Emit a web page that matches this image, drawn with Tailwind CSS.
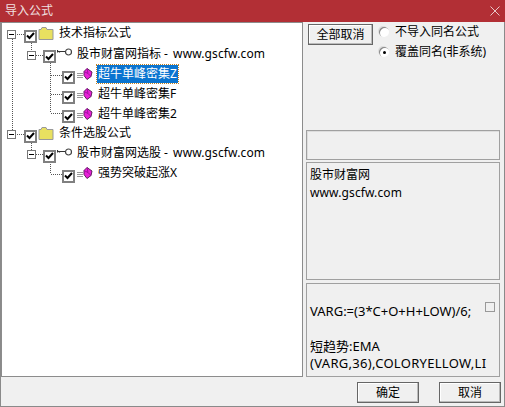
<!DOCTYPE html>
<html lang="zh-CN">
<head>
    <meta charset="UTF-8">
    <title>导入公式</title>
    <script src="https://cdn.jsdelivr.net/npm/@tailwindcss/browser@4"></script>
</head>
<body class="w-[505px] h-[407px] overflow-hidden bg-[#f0f0f0] text-[12px] text-black font-['Noto_Sans','Noto_Sans_CJK_SC',sans-serif]">
<div class="w-[505px] h-[407px] flex flex-col border-x border-b border-[#8a8a8a]">
    <!-- title bar -->
    <header class="h-[22px] shrink-0 -mx-px bg-[#b22f35] flex items-center justify-between pl-[5px] pr-[5px] text-[#f0e0e0] leading-none">
        <span>导入公式</span>
        <svg width="10" height="10" viewBox="0 0 10 10" stroke="#e8c8c8" fill="none"><path d="M0.5 0.5l9 9M9.5 0.5l-9 9"/></svg>
    </header>

    <div class="flex h-[355px] shrink-0">
        <!-- tree -->
        <div class="relative w-[302px] shrink-0 bg-white border border-[#8c8c8c] leading-none">
            <svg class="absolute left-0 top-0" width="120" height="180" fill="none" stroke="#555" stroke-dasharray="1 1">
                <path d="M10.500 16v92M15 11.500h8M29.500 20v9M34 32.500h8M48.500 40v50M49 52.500h12M49 71.500h12M49 90.500h12"/>
                <path d="M15 111.500h8M29.500 120v8M34 131.500h8M48.500 139v12M49 151.500h12"/>
            </svg>

            <div class="relative flex items-center h-[20px] pl-[5px]">
                <span class="mt-[3px] w-[9px] h-[9px] border border-[#777] bg-white flex items-center justify-center"><span class="w-[5px] h-px bg-black"></span></span>
                <span class="mt-[6px] ml-[8px] w-[13px] h-[13px] border-2 border-[#808080] bg-white flex items-center justify-center"><svg width="9" height="8" viewBox="0 0 9 8" fill="none" stroke="#000" stroke-width="2"><path d="M1 3.5l2.5 2.5 4.5-5"/></svg></span>
                <svg class="ml-[1px]" width="16" height="13" viewBox="0 0 16 13"><path d="M1 2.5h2l1-2h4l1 2h6v10h-14z" fill="#e8e060" stroke="#999"/></svg>
                <span class="ml-[5px]">技术指标公式</span>
            </div>
            <div class="relative flex items-center h-[21px] pl-[25px]">
                <span class="mt-[3px] w-[9px] h-[9px] border border-[#777] bg-white flex items-center justify-center"><span class="w-[5px] h-px bg-black"></span></span>
                <span class="mt-[6px] ml-[7px] w-[13px] h-[13px] border-2 border-[#808080] bg-white flex items-center justify-center"><svg width="9" height="8" viewBox="0 0 9 8" fill="none" stroke="#000" stroke-width="2"><path d="M1 3.5l2.5 2.5 4.5-5"/></svg></span>
                <svg class="ml-[1px] -mt-[2px]" width="15" height="9" viewBox="0 0 15 9" fill="none" stroke="#333" stroke-width="1.2"><path d="M0.5 2v2.5M2.5 3v1.500M0.5 3.500h8"/><circle cx="11.500" cy="4" r="3" stroke="#444"/></svg>
                <span class="ml-[5px]">股市财富网指标 - <span class="ml-[2px] tracking-[0.12px]">www.gscfw.com</span></span>
            </div>
            <div class="relative flex items-center h-[20px] pl-[60px]">
                <span class="mt-[6px] w-[13px] h-[13px] border-2 border-[#808080] bg-white flex items-center justify-center"><svg width="9" height="8" viewBox="0 0 9 8" fill="none" stroke="#000" stroke-width="2"><path d="M1 3.5l2.5 2.5 4.5-5"/></svg></span>
                <svg class="ml-[2px]" width="16" height="12" viewBox="0 0 16 12"><path d="M0 5.500h6M0 7.500h6M0 9.500h6" stroke="#999"/><path d="M10 0.500l5 3.500-1 4.500-4 3-3-4v-4z" fill="#e820d8" stroke="#602060"/><path d="M10 0.500l1 5 3 3M7 3.500l4 2" stroke="#a010a0" fill="none"/></svg>
                <span class="ml-[4px] px-px py-[3px] bg-[#0a74d0] text-white outline-1 outline-dotted outline-[#c08020]">超牛单峰密集Z</span>
            </div>
            <div class="relative flex items-center h-[20px] pl-[60px]">
                <span class="mt-[6px] w-[13px] h-[13px] border-2 border-[#808080] bg-white flex items-center justify-center"><svg width="9" height="8" viewBox="0 0 9 8" fill="none" stroke="#000" stroke-width="2"><path d="M1 3.5l2.5 2.5 4.5-5"/></svg></span>
                <svg class="ml-[2px]" width="16" height="12" viewBox="0 0 16 12"><path d="M0 5.500h6M0 7.500h6M0 9.500h6" stroke="#999"/><path d="M10 0.500l5 3.500-1 4.500-4 3-3-4v-4z" fill="#e820d8" stroke="#602060"/><path d="M10 0.500l1 5 3 3M7 3.500l4 2" stroke="#a010a0" fill="none"/></svg>
                <span class="ml-[5px]">超牛单峰密集F</span>
            </div>
            <div class="relative flex items-center h-[19px] pl-[60px]">
                <span class="mt-[6px] w-[13px] h-[13px] border-2 border-[#808080] bg-white flex items-center justify-center"><svg width="9" height="8" viewBox="0 0 9 8" fill="none" stroke="#000" stroke-width="2"><path d="M1 3.5l2.5 2.5 4.5-5"/></svg></span>
                <svg class="ml-[2px]" width="16" height="12" viewBox="0 0 16 12"><path d="M0 5.500h6M0 7.500h6M0 9.500h6" stroke="#999"/><path d="M10 0.500l5 3.500-1 4.500-4 3-3-4v-4z" fill="#e820d8" stroke="#602060"/><path d="M10 0.500l1 5 3 3M7 3.500l4 2" stroke="#a010a0" fill="none"/></svg>
                <span class="ml-[5px]">超牛单峰密集2</span>
            </div>
            <div class="relative flex items-center h-[20px] pl-[5px]">
                <span class="mt-[3px] w-[9px] h-[9px] border border-[#777] bg-white flex items-center justify-center"><span class="w-[5px] h-px bg-black"></span></span>
                <span class="mt-[6px] ml-[8px] w-[13px] h-[13px] border-2 border-[#808080] bg-white flex items-center justify-center"><svg width="9" height="8" viewBox="0 0 9 8" fill="none" stroke="#000" stroke-width="2"><path d="M1 3.5l2.5 2.5 4.5-5"/></svg></span>
                <svg class="ml-[1px]" width="16" height="13" viewBox="0 0 16 13"><path d="M1 2.5h2l1-2h4l1 2h6v10h-14z" fill="#e8e060" stroke="#999"/></svg>
                <span class="ml-[5px]">条件选股公式</span>
            </div>
            <div class="relative flex items-center h-[20px] pl-[25px]">
                <span class="mt-[3px] w-[9px] h-[9px] border border-[#777] bg-white flex items-center justify-center"><span class="w-[5px] h-px bg-black"></span></span>
                <span class="mt-[6px] ml-[7px] w-[13px] h-[13px] border-2 border-[#808080] bg-white flex items-center justify-center"><svg width="9" height="8" viewBox="0 0 9 8" fill="none" stroke="#000" stroke-width="2"><path d="M1 3.5l2.5 2.5 4.5-5"/></svg></span>
                <svg class="ml-[1px] -mt-[2px]" width="15" height="9" viewBox="0 0 15 9" fill="none" stroke="#333" stroke-width="1.2"><path d="M0.5 2v2.5M2.5 3v1.500M0.5 3.500h8"/><circle cx="11.500" cy="4" r="3" stroke="#444"/></svg>
                <span class="ml-[5px]">股市财富网选股 - <span class="ml-[2px] tracking-[0.12px]">www.gscfw.com</span></span>
            </div>
            <div class="relative flex items-center h-[20px] pl-[60px]">
                <span class="mt-[6px] w-[13px] h-[13px] border-2 border-[#808080] bg-white flex items-center justify-center"><svg width="9" height="8" viewBox="0 0 9 8" fill="none" stroke="#000" stroke-width="2"><path d="M1 3.5l2.5 2.5 4.5-5"/></svg></span>
                <svg class="ml-[2px]" width="16" height="12" viewBox="0 0 16 12"><path d="M0 5.500h6M0 7.500h6M0 9.500h6" stroke="#999"/><path d="M10 0.500l5 3.500-1 4.500-4 3-3-4v-4z" fill="#e820d8" stroke="#602060"/><path d="M10 0.500l1 5 3 3M7 3.500l4 2" stroke="#a010a0" fill="none"/></svg>
                <span class="ml-[5px]">强势突破起涨X</span>
            </div>
        </div>

        <!-- right side -->
        <div class="flex-1 flex flex-col pl-[3px] pr-[4px]">
            <div class="flex h-[108px] shrink-0 pl-[2px] pt-[2px]">
                <button class="w-[65px] h-[21px] border border-[#666] bg-[#f0f0f0] shadow-[inset_-1px_-1px_0_#bbb,inset_1px_1px_0_#fff] leading-none">全部取消</button>
                <div class="ml-[6px] flex flex-col gap-[6px] leading-none mt-px">
                    <label class="flex items-center h-[14px]">
                        <span class="w-[10px] h-[10px] rounded-full bg-white shadow-[inset_1px_1px_0_#888,-1px_-1px_0_#ddd]"></span>
                        <span class="ml-[6px]">不导入同名公式</span>
                    </label>
                    <label class="flex items-center h-[14px]">
                        <span class="w-[10px] h-[10px] rounded-full bg-white shadow-[inset_1px_1px_0_#888,-1px_-1px_0_#ddd] flex items-center justify-center"><span class="w-[3px] h-[3px] rounded-full bg-black"></span></span>
                        <span class="ml-[6px]">覆盖同名(非系统)</span>
                    </label>
                </div>
            </div>
            <div class="h-[30px] shrink-0 border border-[#a0a0a0] shadow-[inset_1px_1px_0_#ddd]"></div>
            <div class="mt-[2px] h-[118px] shrink-0 border border-[#a0a0a0] px-[3px] pt-[3px] leading-[18px]">
                <p>股市财富网</p>
                <p class="tracking-[0.12px]">www.gscfw.com</p>
            </div>
            <div class="mt-[3px] flex-1 flex border border-[#a0a0a0] pl-[3px] text-[13px] leading-[17.5px]">
                <div class="w-[170px] pt-[1px] whitespace-nowrap">
                    <p>&nbsp;</p>
                    <p>VARG:=(3*C+O+H+LOW)/6;</p>
                    <p>&nbsp;</p>
                    <p>短趋势:EMA</p>
                    <p class="tracking-[0.3px]">(VARG,36),COLORYELLOW,LI</p>
                </div>
                <span class="mt-[18px] ml-[5px] w-[10px] h-[10px] border border-[#999] bg-[#f0f0f0]"></span>
            </div>
        </div>
    </div>

    <!-- bottom buttons -->
    <div class="flex-1 flex justify-end items-start pt-[5px] pr-[3px] gap-[20px]">
        <button class="w-[62px] h-[21px] border border-[#666] bg-[#f0f0f0] shadow-[inset_-1px_-1px_0_#bbb,inset_1px_1px_0_#fff] leading-none">确定</button>
        <button class="w-[62px] h-[21px] border border-[#666] bg-[#f0f0f0] shadow-[inset_-1px_-1px_0_#bbb,inset_1px_1px_0_#fff] leading-none">取消</button>
    </div>
</div>
</body>
</html>
